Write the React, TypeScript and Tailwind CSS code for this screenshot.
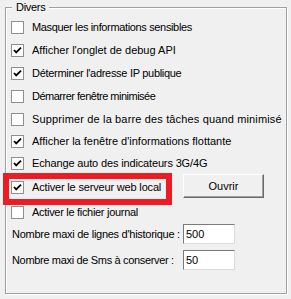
import React from "react";

type Opt = { label: string; checked: boolean; mt: string; track: string };

// margins give the row pitch of the dialog, tracking squeezes Arial to the MS Sans Serif widths
const options: Opt[] = [
  { label: "Masquer les informations sensibles", checked: false, mt: "mt-[13px]", track: "tracking-[-0.35px]" },
  { label: "Afficher l'onglet de debug API", checked: true, mt: "mt-[10px]", track: "" },
  { label: "Déterminer l'adresse IP publique", checked: true, mt: "mt-[10px]", track: "tracking-[-0.3px]" },
  { label: "Démarrer fenêtre minimisée", checked: false, mt: "mt-[10px]", track: "tracking-[-0.5px]" },
  { label: "Supprimer de la barre des tâches quand minimisé", checked: false, mt: "mt-[10px]", track: "tracking-[0.15px]" },
  { label: "Afficher la fenêtre d'informations flottante", checked: true, mt: "mt-[9px]", track: "" },
  { label: "Echange auto des indicateurs 3G/4G", checked: true, mt: "mt-[9px]", track: "tracking-[-0.15px]" },
];

function CheckBox({ checked }: { checked: boolean }) {
  return (
    <span className="flex h-[13px] w-[13px] shrink-0 items-center justify-center border border-[#8e8f8f] bg-white">
      {checked && (
        <svg width="9" height="9" viewBox="0 0 9 9">
          <path d="M1 4 L3.2 6.4 L8 1.6" fill="none" stroke="#000" strokeWidth="1.8" />
        </svg>
      )}
    </span>
  );
}

function Row({
  label,
  checked,
  className,
  track,
}: {
  label: string;
  checked: boolean;
  className?: string;
  track?: string;
}) {
  return (
    <div className={"flex h-[13px] items-center gap-[8px] " + (className ?? "")}>
      <CheckBox checked={checked} />
      <span className={"whitespace-nowrap leading-[13px] " + (track ?? "")}>{label}</span>
    </div>
  );
}

function Field({ label, value, track }: { label: string; value: string; track: string }) {
  return (
    <div className="flex h-[20px] items-center">
      <span className={"w-[172px] whitespace-nowrap pl-[1px] " + track}>{label}</span>
      <div className="flex h-[20px] w-[52px] items-center border border-t-[#7a7a7a] border-l-[#7a7a7a] border-r-[#dcdcdc] border-b-[#dcdcdc] bg-white pl-[2px]">
        {value}
      </div>
    </div>
  );
}

export default function App() {
  return (
    <div
      className="h-[299px] w-[291px] overflow-hidden bg-[#f0f0f0] pl-[5px] pt-[7px] text-[11px] text-black"
      style={{ fontFamily: '"Liberation Sans", Arial, sans-serif' }}
    >
      <div className="relative h-[287px] w-[282px] border border-[#a0a0a0] pl-[5px] shadow-[inset_1px_1px_0_#fff,1px_1px_0_#fff]">
        {/* legend sits over the top border */}
        <span className="absolute -top-[8px] left-[6px] bg-[#f0f0f0] px-[4px] leading-[14px] tracking-[-0.3px]">
          Divers
        </span>

        {options.map((o) => (
          <Row key={o.label} label={o.label} checked={o.checked} className={o.mt} track={o.track} />
        ))}

        <div className="mt-[4px] flex h-[24px] items-center">
          <div className="w-[172px] pt-[2px]">
            <Row label="Activer le serveur web local" checked track="tracking-[-0.17px]" />
          </div>
          <button className="h-[24px] w-[81px] border border-t-white border-l-white border-r-[#696969] border-b-[#696969] bg-[#f0f0f0] leading-[13px] shadow-[inset_-1px_-1px_0_#a0a0a0]">
            Ouvrir
          </button>
        </div>

        <Row label="Activer le fichier journal" checked={false} className="mt-[8px]" track="tracking-[-0.3px]" />

        <div className="mt-[5px] flex flex-col gap-[6px]">
          <Field label="Nombre maxi de lignes d'historique :" value="500" track="tracking-[-0.27px]" />
          <Field label="Nombre maxi de Sms à conserver :" value="50" track="tracking-[-0.33px]" />
        </div>

        {/* red highlight drawn over the dialog */}
        <div className="pointer-events-none absolute left-[-3px] top-[165px] h-[32px] w-[169px] border-[6px] border-[#ed1c24]" />
      </div>
    </div>
  );
}
